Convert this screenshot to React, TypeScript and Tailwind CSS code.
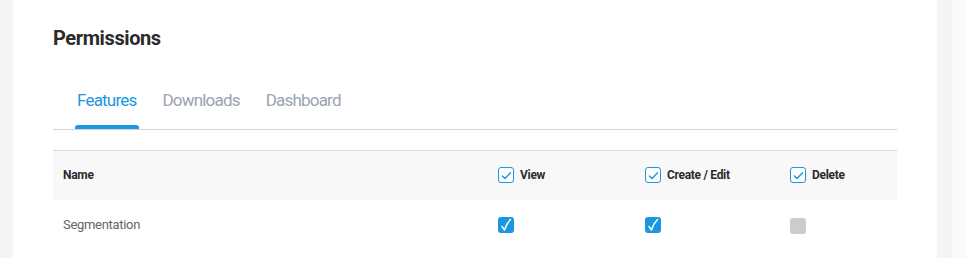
import React from 'react'

function OutlineCheck() {
  return (
    <span className="flex h-4 w-4 items-center justify-center rounded-[3px] border border-[#1a97e0] bg-white">
      <svg viewBox="0 0 16 16" className="h-[13px] w-[13px]" fill="none" stroke="#1a97e0" strokeWidth="1.7" strokeLinecap="round" strokeLinejoin="round">
        <path d="M3 8.5l3.2 3.2L13 4.5" />
      </svg>
    </span>
  )
}

function FilledCheck({ on }: { on: boolean }) {
  if (!on) return <span className="mt-[2px] block h-4 w-4 rounded-[3px] bg-[#cccccc]" />
  return (
    <span className="flex h-4 w-4 items-center justify-center rounded-[3px] bg-[#1a97e0]">
      <svg viewBox="0 0 16 16" className="h-4 w-4" fill="none" stroke="white" strokeWidth="1.5" strokeLinecap="round" strokeLinejoin="round">
        <path d="M4 9.5l2.5 3.5C8 8 10 5 12.5 2.5" />
      </svg>
    </span>
  )
}

export default function App() {
  const tabs = ['Features', 'Downloads', 'Dashboard']
  const cols = ['View', 'Create / Edit', 'Delete']
  return (
    <div className="flex h-[258px] w-[966px] bg-[#f3f4f4] font-['Roboto',sans-serif]">
      <div className="w-[13px]" />
      <div className="w-[924px] bg-white px-[40px] pt-[23px]">
        <h1 className="text-[20px] font-bold tracking-[-0.4px] text-[#2b2b2b]">Permissions</h1>

        {/* tabs */}
        <div className="mt-[35px] flex gap-[22px] border-b border-[#d5d5d5] pl-[22px]">
          {tabs.map((t, i) => (
            <div key={t} className="relative px-[2px] pb-[15px] text-[17px] tracking-[-0.8px]">
              <span className={i === 0 ? 'text-[#1a97e0]' : 'text-[#9aa3b2]'}>{t}</span>
              {i === 0 && <span className="absolute bottom-0 left-0 right-[-1px] h-[4px] rounded-t-[3px] bg-[#1a97e0]" />}
            </div>
          ))}
        </div>

        {/* table */}
        <div className="mt-[20px] border-t border-[#dadada]">
          <div className="grid h-[49px] grid-cols-[435px_147px_145px_1fr] items-center bg-[#f8f8f8] text-[12px] font-bold tracking-[-0.3px] text-[#2b2b2b]">
            <div className="pl-[10px]">Name</div>
            {cols.map(c => (
              <div key={c} className="flex items-center gap-[6px] pl-[10px]">
                <OutlineCheck />
                <span>{c}</span>
              </div>
            ))}
          </div>
          <div className="grid h-[50px] grid-cols-[435px_147px_145px_1fr] items-center text-[13px] tracking-[-0.3px] text-[#666666]">
            <div className="pl-[10px]">Segmentation</div>
            <div className="pl-[10px]"><FilledCheck on /></div>
            <div className="pl-[10px]"><FilledCheck on /></div>
            <div className="pl-[10px]"><FilledCheck on={false} /></div>
          </div>
        </div>
      </div>
      <div className="w-[15px]" />
      <div className="flex-1 bg-[#fafafa]" />
    </div>
  )
}
